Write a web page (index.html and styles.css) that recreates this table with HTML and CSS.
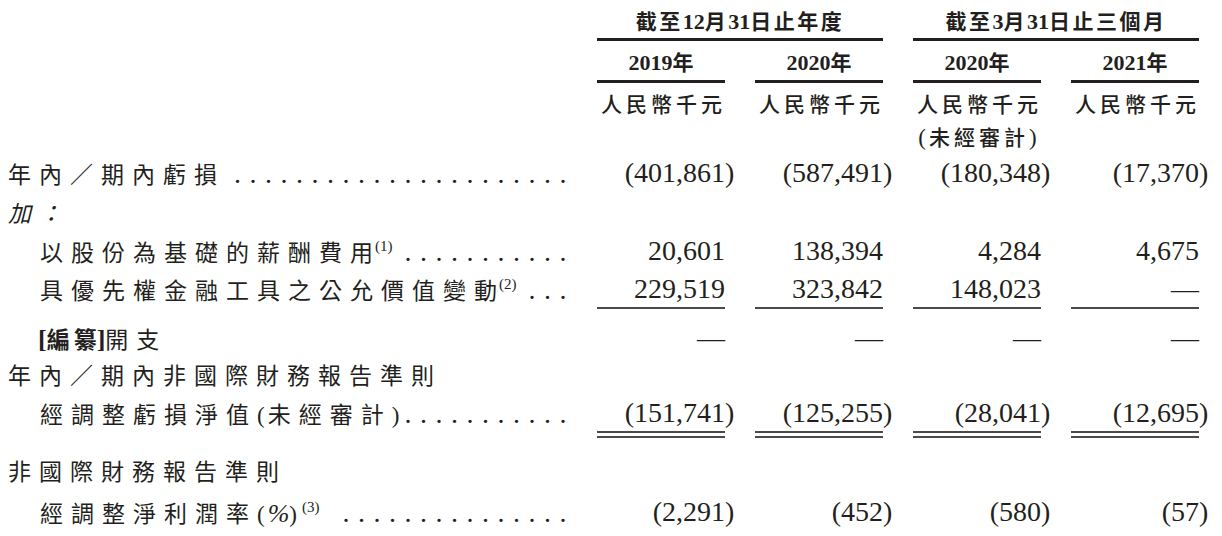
FILE: index.html
```html
<!DOCTYPE html>
<html lang="zh-Hant">
<head>
<meta charset="utf-8">
<title>財務資料</title>
<link rel="stylesheet" href="styles.css">
</head>
<body>
<div class="sheet">
  <div class="row hdr-group">
    <div class="lbl"></div>
    <div class="grp g1">截至<span class="d">12</span>月<span class="d">31</span>日止年度</div>
    <div class="grp g2">截至<span class="d">3</span>月<span class="d">31</span>日止三個月</div>
  </div>
  <div class="row hdr-year">
    <div class="lbl"></div>
    <div class="yr"><span class="d">2019</span>年</div>
    <div class="yr"><span class="d">2020</span>年</div>
    <div class="yr"><span class="d">2020</span>年</div>
    <div class="yr"><span class="d">2021</span>年</div>
  </div>
  <div class="row hdr-unit">
    <div class="lbl"></div>
    <div class="unit">人民幣千元</div>
    <div class="unit">人民幣千元</div>
    <div class="unit">人民幣千元<br><span class="pn">(</span>未經審計<span class="pn">)</span></div>
    <div class="unit">人民幣千元</div>
  </div>

  <div class="row r1">
    <div class="lbl"><span class="t">年內／期內虧損</span><span class="leader">......................</span></div>
    <div class="num">(401,861<span class="rp">)</span></div>
    <div class="num">(587,491<span class="rp">)</span></div>
    <div class="num">(180,348<span class="rp">)</span></div>
    <div class="num">(17,370<span class="rp">)</span></div>
  </div>
  <div class="row r2">
    <div class="lbl"><span class="t it">加：</span></div>
  </div>
  <div class="row r3">
    <div class="lbl ind"><span class="t">以股份為基礎的薪酬費<span class="last">用</span><sup class="fn">(1)</sup></span><span class="leader">...........</span></div>
    <div class="num">20,601</div>
    <div class="num">138,394</div>
    <div class="num">4,284</div>
    <div class="num">4,675</div>
  </div>
  <div class="row r4">
    <div class="lbl ind"><span class="t">具優先權金融工具之公允價值變<span class="last">動</span><sup class="fn">(2)</sup></span><span class="leader">...</span></div>
    <div class="num rule">229,519</div>
    <div class="num rule">323,842</div>
    <div class="num rule">148,023</div>
    <div class="num rule">—</div>
  </div>
  <div class="row r5">
    <div class="lbl ind2"><span class="t"><b class="br">[</b><b class="bk1">編</b><b>纂</b><b class="br">]</b>開支</span></div>
    <div class="num">—</div>
    <div class="num">—</div>
    <div class="num">—</div>
    <div class="num">—</div>
  </div>
  <div class="row r6">
    <div class="lbl"><span class="t">年內／期內非國際財務報告準則</span></div>
  </div>
  <div class="row r7">
    <div class="lbl ind"><span class="t">經調整虧損淨值<span class="pn">(</span>未經審計<span class="pn">)</span></span><span class="leader">...........</span></div>
    <div class="num dbl"><span class="val">(151,741<span class="rp">)</span></span></div>
    <div class="num dbl"><span class="val">(125,255<span class="rp">)</span></span></div>
    <div class="num dbl"><span class="val">(28,041<span class="rp">)</span></span></div>
    <div class="num dbl"><span class="val">(12,695<span class="rp">)</span></span></div>
  </div>
  <div class="row r8">
    <div class="lbl"><span class="t">非國際財務報告準則</span></div>
  </div>
  <div class="row r9">
    <div class="lbl ind"><span class="t">經調整淨利潤率<span class="pn">(</span><span class="pct">%</span><span class="pn">)</span><sup class="fn fn3">(3)</sup></span><span class="leader">...............</span></div>
    <div class="num">(2,291<span class="rp">)</span></div>
    <div class="num">(452<span class="rp">)</span></div>
    <div class="num">(580<span class="rp">)</span></div>
    <div class="num">(57<span class="rp">)</span></div>
  </div>
</div>
</body>
</html>
```

FILE: styles.css
```css
html, body {
  margin: 0;
  padding: 0;
  background: #ffffff;
}

body {
  color: #231f20;
  font-family: "Noto Sans CJK TC", "Noto Sans CJK SC", sans-serif;
}

.sheet {
  width: 1222px;
  padding-left: 8px;
  box-sizing: border-box;
}

.row {
  display: grid;
  grid-template-columns: 559px repeat(4, 128px);
  column-gap: 30px;
  align-items: start;
}

/* ---------- header ---------- */
.hdr-group {
  font-weight: 700;
  font-size: 21px;
}
.grp {
  height: 36px;
  padding-top: 2px;
  line-height: 36px;
  text-align: center;
  letter-spacing: 2.5px;
  border-bottom: 3px solid #231f20;
  white-space: nowrap;
}
.g1 { grid-column: 2 / span 2; }
.g2 { grid-column: 4 / span 2; }

.d {
  font-family: "Liberation Serif", serif;
  font-weight: 700;
  font-size: 22px;
  letter-spacing: 0;
  line-height: 1;
}

.hdr-year {
  font-weight: 700;
  font-size: 21px;
}
.yr {
  height: 36px;
  padding-top: 3px;
  line-height: 34px;
  text-align: center;
  border-bottom: 3px solid #231f20;
}

.hdr-unit {
  font-size: 21px;
  font-weight: 500;
}
.unit {
  padding-top: 4px;
  line-height: 33px;
  text-align: center;
  letter-spacing: 4px;
  padding-left: 4px;
  white-space: nowrap;
}
.pn {
  font-family: "Liberation Serif", serif;
  font-weight: 400;
  font-size: 23px;
  letter-spacing: 3px;
  line-height: 1;
}

/* ---------- body rows ---------- */
.lbl {
  display: flex;
  align-items: baseline;
  height: 36px;
  line-height: 36px;
  font-size: 23px;
  font-weight: 400;
  letter-spacing: 8px;
  white-space: nowrap;
  min-width: 0;
}
.lbl.ind { padding-left: 32px; }
.lbl.ind2 { padding-left: 30px; }

.t { flex: none; }
.t .last {
  letter-spacing: 0;
  margin-right: 2px;
}
.it { font-style: italic; }
.br {
  font-family: "Liberation Serif", serif;
  font-size: 26px;
  letter-spacing: 0;
  line-height: 1;
}
.t b {
  font-weight: 700;
  line-height: 1;
}
.t b.bk1 { letter-spacing: 4px; }
.t b:not(.br):not(.bk1) { letter-spacing: 0; }

.fn {
  font-family: "Liberation Serif", serif;
  font-size: 15px;
  letter-spacing: 0;
  line-height: 0;
  vertical-align: 10px;
}
.fn3 { margin-left: 2px; }

.pct {
  font-family: "Liberation Serif", serif;
  font-style: italic;
  font-size: 26px;
  letter-spacing: 0;
  line-height: 1;
}

.leader {
  flex: none;
  margin-left: auto;
  margin-right: -8px;
  font-family: "Liberation Serif", serif;
  font-size: 28px;
  line-height: 1;
  letter-spacing: 8.5px;
}

.num {
  font-family: "Liberation Serif", serif;
  font-size: 28px;
  height: 36px;
  line-height: 36px;
  text-align: right;
  white-space: nowrap;
}
.rp { margin-right: -0.333em; }

.num.rule { border-bottom: 2px solid #4a4a4a; }

.num.dbl {
  padding-bottom: 5px;
  border-bottom: 2px solid #4a4a4a;
}
.num.dbl .val {
  display: block;
  height: 36px;
  border-bottom: 2px solid #4a4a4a;
}

.r1 { margin-top: 2px; }
.r2 { margin-top: 3px; }
.r3 { margin-top: 3px; }
.r4 { margin-top: 2px; }
.r5 { margin-top: 11px; }
.r6 { margin-top: 0; }
.r7 { margin-top: 3px; }
.r8 { margin-top: 14px; }
.r9 { margin-top: 6px; }
```
